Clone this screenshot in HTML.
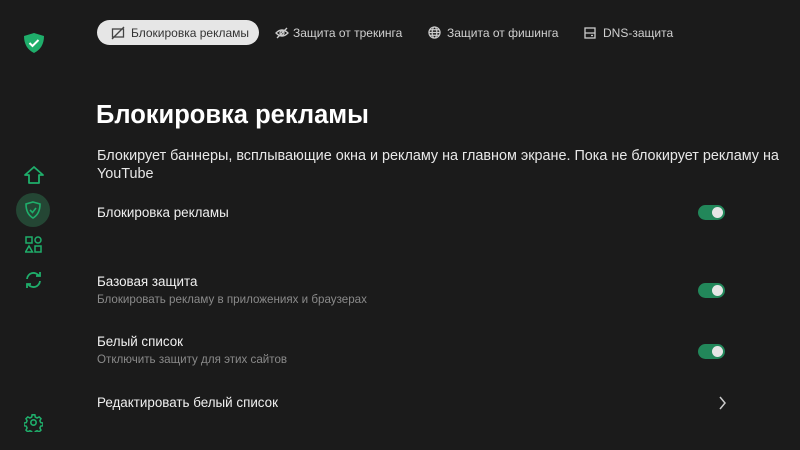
<!DOCTYPE html>
<html><head><meta charset="utf-8"><style>
*{margin:0;padding:0;box-sizing:border-box}
body{width:800px;height:450px;background:#1b1b1b;font-family:"Liberation Sans",sans-serif;position:relative;overflow:hidden;color:#fff}
.a{position:absolute}
.tab{position:absolute;top:20px;height:25px;display:flex;align-items:center;font-size:12px;color:#d0d0d0;white-space:nowrap}
.tab svg{position:absolute;left:0}
.pill{left:97px;width:162px;background:#e6e6e6;border-radius:13px;color:#333}
.tg{position:absolute;left:698px;width:27px;height:15px;border-radius:8px;background:#22875a}
.tg::after{content:"";position:absolute;right:2px;top:2px;width:11px;height:11px;border-radius:50%;background:#e6e6e6}
.t{position:absolute;left:97px;font-size:13.4px;color:#f0f0f0}
.s{position:absolute;left:97px;font-size:11.6px;color:#8a8a8a}
</style></head><body>
<svg class="a" style="left:23px;top:32px" width="22" height="22" viewBox="0 0 22 22"><path d="M11 1 L21 4 Q21 16 11 21 Q1 16 1 4 Z" fill="#1fae6b"/><path d="M6.5 11 L9.5 14 L15.5 8" stroke="#fff" stroke-width="2" fill="none"/></svg>

<div class="tab pill"><svg style="left:14px" width="14" height="14" viewBox="0 0 14 14" fill="none" stroke="#444" stroke-width="1.3"><rect x="1.5" y="3" width="11" height="8"/><path d="M1 13 L13 1"/></svg><span style="position:absolute;left:34px">Блокировка рекламы</span></div>
<div class="tab" style="left:275px"><svg width="14" height="14" viewBox="0 0 14 14" fill="none" stroke="#ccc" stroke-width="1.3"><path d="M1 7 Q7 1 13 7 Q7 13 1 7Z"/><circle cx="7" cy="7" r="2"/><path d="M2 12 L12 2"/></svg><span style="margin-left:18px">Защита от трекинга</span></div>
<div class="tab" style="left:428px"><svg width="13" height="13" viewBox="0 0 14 14" fill="none" stroke="#ccc" stroke-width="1.3"><circle cx="7" cy="7" r="6"/><ellipse cx="7" cy="7" rx="2.5" ry="6"/><path d="M1 7H13M2 4H12M2 10H12"/></svg><span style="margin-left:19px">Защита от фишинга</span></div>
<div class="tab" style="left:584px"><svg width="12" height="12" viewBox="0 0 12 12" fill="none" stroke="#ccc" stroke-width="1.3"><rect x="1" y="1" width="10" height="10"/><path d="M1 6H11M7 8.5H9"/></svg><span style="margin-left:19px">DNS-защита</span></div>

<svg class="a" style="left:24px;top:166px" width="20" height="18" viewBox="0 0 20 18" fill="none" stroke="#1fae6b" stroke-width="1.8"><path d="M10 1 L19 9 H15 V17 H5 V9 H1 Z" stroke-linejoin="round"/></svg>
<div class="a" style="left:16px;top:193px;width:34px;height:34px;border-radius:50%;background:#244634"></div>
<svg class="a" style="left:25px;top:201px" width="16" height="18" viewBox="0 0 16 18" fill="none" stroke="#1fae6b" stroke-width="1.6"><path d="M8 1 L15 3 Q15 13 8 17 Q1 13 1 3 Z"/><path d="M5 9 L7.5 11.5 L11 7"/></svg>
<svg class="a" style="left:25px;top:236px" width="17" height="17" viewBox="0 0 17 17" fill="none" stroke="#1fae6b" stroke-width="1.5"><rect x="1" y="1" width="6" height="6"/><circle cx="13" cy="4" r="3"/><path d="M4 10 L7.5 16 H0.5Z"/><rect x="10" y="10" width="6" height="6"/></svg>
<svg class="a" style="left:24px;top:271px" width="19" height="18" viewBox="0 0 19 18" fill="none" stroke="#1fae6b" stroke-width="1.8"><path d="M3 8 A6.5 6.5 0 0 1 15 5"/><path d="M16 10 A6.5 6.5 0 0 1 4 13"/><path d="M12 5 H16 V1"/><path d="M7 13 H3 V17"/></svg>
<svg class="a" style="left:24px;top:413px" width="19" height="19" viewBox="0 0 20 20" fill="none" stroke="#1fae6b" stroke-width="1.7"><path d="M8.5 1.5h3l.5 2.5 2 1 2.3-1.2 2 2-1.2 2.3.9 2 2.5.5v3l-2.5.5-.9 2 1.2 2.3-2 2-2.3-1.2-2 .9-.5 2.5h-3l-.5-2.5-2-.9-2.3 1.2-2-2 1.2-2.3-.9-2-2.5-.5v-3l2.5-.5.9-2-1.2-2.3 2-2 2.3 1.2 2-1z" transform="scale(.95) translate(.5 .5)"/><circle cx="10" cy="10" r="2.8"/></svg>

<div class="a" style="left:96px;top:101px;font-size:25.5px;font-weight:bold;color:#fff">Блокировка рекламы</div>
<div class="a" style="left:97px;top:147px;width:720px;font-size:14.4px;line-height:18px;color:#e8e8e8;white-space:nowrap">Блокирует баннеры, всплывающие окна и рекламу на главном экране. Пока не блокирует рекламу на<br>YouTube</div>
<div class="t" style="top:205px">Блокировка рекламы</div><div class="tg" style="top:205px"></div>
<div class="t" style="top:274px">Базовая защита</div><div class="s" style="top:293px">Блокировать рекламу в приложениях и браузерах</div><div class="tg" style="top:283px"></div>
<div class="t" style="top:334px">Белый список</div><div class="s" style="top:353px">Отключить защиту для этих сайтов</div><div class="tg" style="top:344px"></div>
<div class="t" style="top:395px">Редактировать белый список</div>
<svg class="a" style="left:718px;top:396px" width="9" height="14" viewBox="0 0 9 14" fill="none" stroke="#ccc" stroke-width="1.5"><path d="M2 1 L7 7 L2 13"/></svg>
</body></html>
